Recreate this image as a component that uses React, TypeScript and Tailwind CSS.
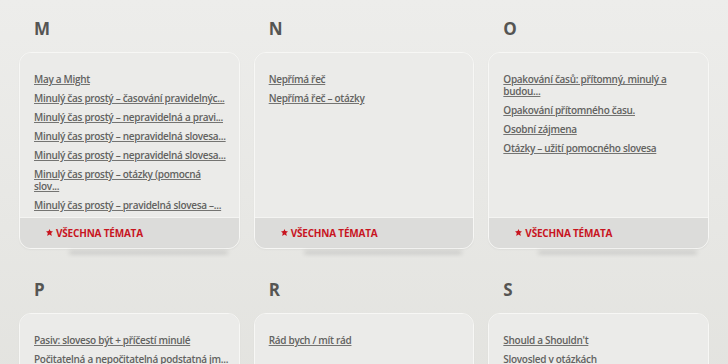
import React from "react";

type Section = { letter: string; links: React.ReactNode[] };

const row1: Section[] = [
  {
    letter: "M",
    links: [
      "May a Might",
      "Minulý čas prostý – časování pravidelnýc...",
      "Minulý čas prostý – nepravidelná a pravi...",
      "Minulý čas prostý – nepravidelná slovesa...",
      "Minulý čas prostý – nepravidelná slovesa...",
      <>
        Minulý čas prostý – otázky (pomocná
        <br />
        slov...
      </>,
      "Minulý čas prostý – pravidelná slovesa –...",
    ],
  },
  { letter: "N", links: ["Nepřímá řeč", "Nepřímá řeč – otázky"] },
  {
    letter: "O",
    links: [
      <>
        Opakování časů: přítomný, minulý a
        <br />
        budou...
      </>,
      "Opakování přítomného času.",
      "Osobní zájmena",
      "Otázky – užití pomocného slovesa",
    ],
  },
];

const row2: Section[] = [
  {
    letter: "P",
    links: [
      "Pasiv: sloveso být + příčestí minulé",
      "Počitatelná a nepočitatelná podstatná jm...",
      "Předložky času",
    ],
  },
  { letter: "R", links: ["Rád bych / mít rád"] },
  { letter: "S", links: ["Should a Shouldn't", "Slovosled v otázkách"] },
];

function Card({ s }: { s: Section }) {
  return (
    <div className="flex flex-col">
      <h2 className="text-[17px] leading-[20px] font-bold text-[#555553] pl-[15px] mb-[13px]">
        {s.letter}
      </h2>
      <div className="relative flex-1 flex flex-col">
        <div className="flex-1 flex flex-col rounded-[12px] overflow-hidden border border-[#f7f7f5] shadow-[0_1px_2px_rgba(0,0,0,0.04)]">
          <div className="flex-1 bg-[#ebebe9] pl-[14px] pr-[8px] pt-[20px] pb-[6px] flex flex-col gap-[7px]">
            {s.links.map((l, i) => (
              <a
                key={i}
                href="#"
                className="block whitespace-nowrap text-[10px] leading-[12px] font-semibold text-[#626260] underline decoration-[#747472] underline-offset-[1px] tracking-[-0.3px]"
              >
                {l}
              </a>
            ))}
          </div>
          <div className="h-[31px] shrink-0 bg-[#dcdcda] border-t border-[#f4f4f2] flex items-center pl-[26px]">
            <svg width="7" height="7" viewBox="0 0 7 7" className="mr-[3px] mt-[-1px]">
              <path
                d="M3.5 0 L4.4 2.1 L7 2.4 L5.2 4 L5.8 7 L3.5 5.6 L1.2 7 L1.8 4 L0 2.4 L2.6 2.1 Z"
                fill="#c8151f"
              />
            </svg>
            <span className="text-[10px] font-bold text-[#c8151f] tracking-[-0.2px] uppercase">
              Všechna témata
            </span>
          </div>
        </div>
        <div className="absolute left-[50px] right-[12px] bottom-[-5px] h-[3px] rounded-full bg-black/15 blur-[2px]" />
      </div>
    </div>
  );
}

function Row({ items }: { items: Section[] }) {
  return (
    <div className="grid grid-cols-3 gap-x-[14px]">
      {items.map((s) => (
        <Card key={s.letter} s={s} />
      ))}
    </div>
  );
}

export default function App() {
  return (
    <div
      className="min-h-screen w-[728px] overflow-hidden bg-gradient-to-b from-[#ededeb] to-[#e2e2de] px-[19px] pt-[19px]"
      style={{ fontFamily: '"Open Sans", "Noto Sans", sans-serif' }}
    >
      <Row items={row1} />
      <div className="h-[31px]" />
      <Row items={row2} />
    </div>
  );
}
